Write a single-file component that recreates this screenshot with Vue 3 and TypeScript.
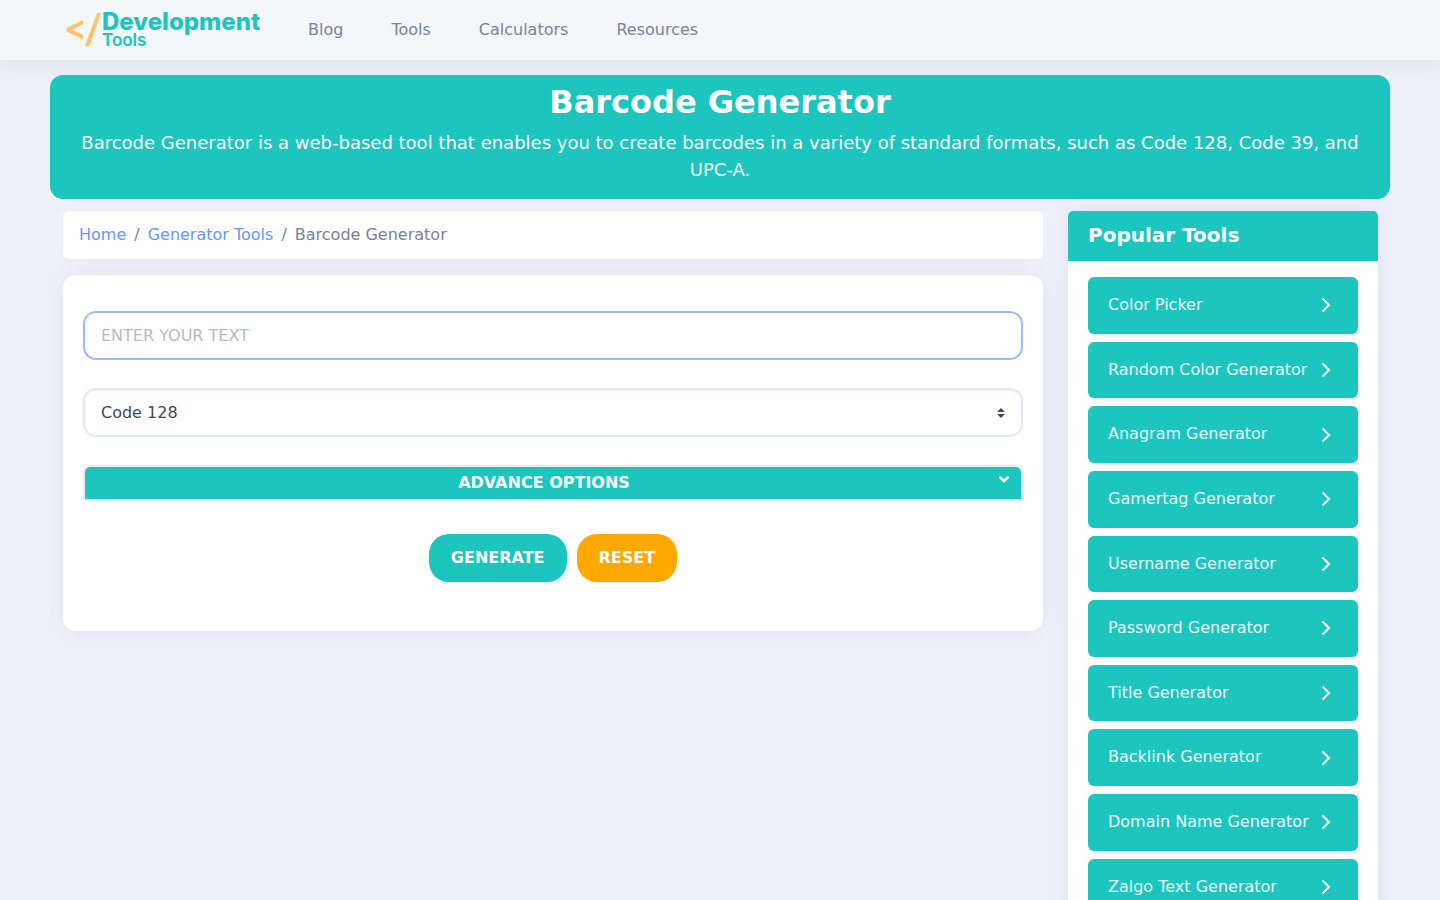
<script setup lang="ts">
import { ref } from 'vue'

const navLinks: string[] = ['Blog', 'Tools', 'Calculators', 'Resources']
const formats: string[] = ['Code 128', 'Code 39', 'UPC-A']
const popularTools: string[] = [
  'Color Picker',
  'Random Color Generator',
  'Anagram Generator',
  'Gamertag Generator',
  'Username Generator',
  'Password Generator',
  'Title Generator',
  'Backlink Generator',
  'Domain Name Generator',
  'Zalgo Text Generator',
]

const text = ref('')
const format = ref(formats[0])

function reset(): void {
  text.value = ''
  format.value = formats[0]
}
</script>

<template>
  <div class="page">
    <header class="navbar">
      <a class="logo" href="#" aria-label="Development Tools">
        <svg class="logo-mark" width="36" height="36" viewBox="0 0 36 36" aria-hidden="true">
          <path d="M17 8 0.500 16v3.500L17 27.500v-4.500L6 17.700 17 12.500z" fill="#ffc469" />
          <path d="M31 1h4L23.500 34H19z" fill="#ffc469" />
        </svg>
        <span class="logo-text">
          <span class="logo-name">Development</span>
          <span class="logo-sub">Tools</span>
        </span>
      </a>
      <nav class="nav-links">
        <a v-for="link in navLinks" :key="link" href="#">{{ link }}</a>
      </nav>
    </header>

    <div class="container">
      <section class="hero">
        <h1>Barcode Generator</h1>
        <p>
          Barcode Generator is a web-based tool that enables you to create barcodes in a variety of
          standard formats, such as Code 128, Code 39, and UPC-A.
        </p>
      </section>

      <div class="columns">
        <main>
          <nav class="breadcrumb" aria-label="Breadcrumb">
            <a href="#">Home</a>
            <span>/</span>
            <a href="#">Generator Tools</a>
            <span>/</span>
            <span>Barcode Generator</span>
          </nav>

          <form class="card" @submit.prevent>
            <input v-model="text" class="field active" type="text" aria-label="Text" placeholder="ENTER YOUR TEXT" />
            <div class="select-wrap">
              <select v-model="format" class="field" aria-label="Barcode format">
                <option v-for="item in formats" :key="item">{{ item }}</option>
              </select>
              <svg class="select-arrows" width="8" height="10" viewBox="0 0 8 10" aria-hidden="true">
                <path d="M4 0 0 4h8zM4 10 0 6h8z" fill="#43485e" />
              </svg>
            </div>
            <button class="advance" type="button">
              <span>ADVANCE OPTIONS</span>
              <svg width="10" height="7" viewBox="0 0 10 7" aria-hidden="true">
                <path d="M1.300 1.500 5 5l3.700-3.500" fill="none" stroke="#fff" stroke-width="2.600" stroke-linecap="round" />
              </svg>
            </button>
            <div class="actions">
              <button class="btn generate" type="submit">GENERATE</button>
              <button class="btn reset" type="button" @click="reset">RESET</button>
            </div>
          </form>
        </main>

        <aside class="sidebar">
          <h2>Popular Tools</h2>
          <div class="tool-list">
            <a v-for="tool in popularTools" :key="tool" href="#">
              <span>{{ tool }}</span>
              <svg width="10" height="16" viewBox="0 0 10 16" aria-hidden="true">
                <path d="M1.500 1.500 8 8l-6.500 6.500" fill="none" stroke="#fff" stroke-width="2" />
              </svg>
            </a>
          </div>
        </aside>
      </div>
    </div>
  </div>
</template>

<style>
body {
  background: #edf0f9;
}
</style>

<style scoped>
* {
  box-sizing: border-box;
}

.page {
  font-family: 'DejaVu Sans', sans-serif;
  font-size: 16px;
  line-height: 24px;
  color: #7b8199;
}

a {
  color: inherit;
  text-decoration: none;
}

.navbar {
  display: flex;
  align-items: center;
  gap: 48px;
  height: 60px;
  padding: 0 66px;
  background: #f3f7fa;
  box-shadow: 0 0 24px rgba(40, 40, 50, 0.1);
}

.logo {
  display: flex;
  width: 194px;
  color: #1cc5be;
}

.logo-mark {
  flex: none;
}

.logo-text {
  display: flex;
  flex-direction: column;
  font-family: Inter, sans-serif;
}

.logo-name {
  font-size: 24px;
  line-height: 20px;
  font-weight: 800;
}

.logo-sub {
  font-size: 17px;
  line-height: 16px;
  font-weight: 600;
}

.nav-links {
  display: flex;
  gap: 48px;
}

.container {
  padding: 15px 50px 16px;
}

.hero {
  padding: 8px 16px 16px;
  border-radius: 13px;
  background: #1cc5be;
  color: #fff;
  text-align: center;
}

h1,
h2,
p {
  margin: 0;
}

h1 {
  font-size: 32px;
  line-height: 38px;
}

.hero p {
  margin-top: 8px;
  font-size: 18px;
  line-height: 27px;
}

.columns {
  display: grid;
  grid-template-columns: minmax(0, 1fr) 310px;
  align-items: start;
  gap: 25px;
  margin-top: 12px;
  padding: 0 12px 0 13px;
}

.breadcrumb {
  display: flex;
  gap: 8px;
  padding: 12px 16px;
  border-radius: 6px;
  background: #fff;
}

.breadcrumb a {
  color: #6996ff;
}

.card {
  display: flex;
  flex-direction: column;
  gap: 28px;
  margin-top: 16px;
  padding: 36px 20px 49px;
  border-radius: 13px;
  background: #fff;
  box-shadow: 0 0 24px rgba(31, 45, 61, 0.05);
}

.field {
  display: block;
  width: 100%;
  height: 49px;
  padding: 0 16px;
  border: 2px solid #e5e8ef;
  border-radius: 13px;
  background: #fff;
  color: #43485e;
  font: inherit;
  outline: none;
  appearance: none;
}

.field.active {
  border-color: #9cbaff;
}

.field::placeholder {
  color: #b5bac9;
  opacity: 1;
}

.select-wrap {
  position: relative;
}

.select-wrap .field {
  box-shadow: inset 0 1px 2px rgba(31, 45, 61, 0.08);
}

.select-arrows {
  position: absolute;
  right: 18px;
  top: 20px;
  pointer-events: none;
}

.advance {
  display: flex;
  align-items: flex-start;
  padding: 4px 12px 4px 4px;
  border: 2px solid #eaecf0;
  border-radius: 7px 7px 2px 2px;
  background: #1cc5be;
  background-clip: padding-box;
  color: #fff;
  font: inherit;
  font-weight: 700;
}

.advance span {
  flex: 1;
}

.advance svg {
  margin-top: 5px;
}

.actions {
  display: flex;
  justify-content: center;
  gap: 10px;
  margin-top: 5px;
}

.btn {
  padding: 12px 22px;
  border: 0;
  border-radius: 20px;
  color: #fff;
  font: inherit;
  font-weight: 700;
}

.generate {
  background: #1cc5be;
}

.reset {
  background: #ffa900;
}

.sidebar {
  border-radius: 5px;
  background: #fff;
  box-shadow: 0 0 24px rgba(31, 45, 61, 0.05);
}

h2 {
  padding: 12px 20px 14px;
  border-radius: 5px 5px 0 0;
  background: #1cc5be;
  color: #fff;
  font-size: 20px;
  line-height: 24px;
}

.tool-list {
  display: flex;
  flex-direction: column;
  gap: 8px;
  padding: 16px 20px;
}

.tool-list a {
  display: flex;
  align-items: center;
  justify-content: space-between;
  padding: 16px 27px 16px 20px;
  border-radius: 6px;
  background: #1cc5be;
  box-shadow: 0 0 20px rgba(0, 0, 0, 0.025);
  color: #edfafa;
  line-height: 1.54;
}
</style>
